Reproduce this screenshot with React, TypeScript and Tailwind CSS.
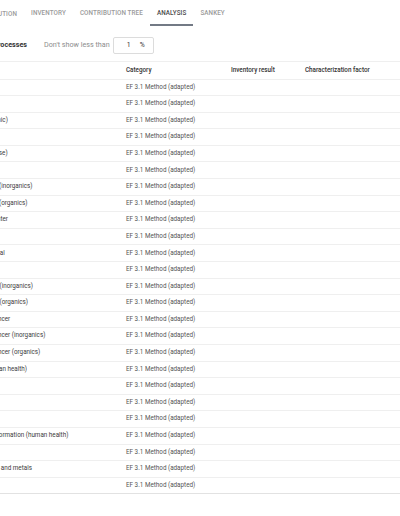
import type React from "react";

const tabs = ["INVENTORY", "CONTRIBUTION TREE", "ANALYSIS", "SANKEY"];

const categories = [
  "Acidification",
  "Climate change",
  "Climate change (biogenic)",
  "Climate change (fossil)",
  "Climate change (land use)",
  "Ecotoxicity, freshwater",
  "Ecotoxicity, freshwater (inorganics)",
  "Ecotoxicity, freshwater (organics)",
  "Eutrophication, freshwater",
  "Eutrophication, marine",
  "Eutrophication, terrestrial",
  "Human toxicity, cancer",
  "Human toxicity, cancer (inorganics)",
  "Human toxicity, cancer (organics)",
  "Human toxicity, non-cancer",
  "Human toxicity, non-cancer (inorganics)",
  "Human toxicity, non-cancer (organics)",
  "Ionising radiation (human health)",
  "Land use",
  "Ozone depletion",
  "Particulate matter",
  "Photochemical ozone formation (human health)",
  "Resource use, fossils",
  "Resource use, minerals and metals",
  "Water use",
];

const App: React.FC = () => {
  return (
    <div className="w-[400px] h-[516px] overflow-hidden bg-white font-['Roboto',sans-serif]">
      {/* Onglets */}
      <div className="flex h-[26px] text-[6.3px] font-medium tracking-[0.1px] uppercase">
        <div className="w-[24px] flex justify-end">
          <div className="whitespace-nowrap pr-[7px] pt-[4px] flex items-center text-[#9a9a9a]">
            DISTRIBUTION
          </div>
        </div>
        {tabs.map((t) => (
          <div
            key={t}
            className={
              t === "ANALYSIS"
                ? "px-[7px] pt-[4px] flex items-center whitespace-nowrap text-[#4a4a4a] border-b-2 border-[#737a85]"
                : "px-[7px] pt-[4px] flex items-center whitespace-nowrap text-[#9a9a9a] border-b-2 border-transparent"
            }
          >
            {t}
          </div>
        ))}
      </div>

      {/* Filtre */}
      <div className="flex items-center h-[35px] pt-[3px]">
        <div className="w-[27px] flex justify-end">
          <span className="whitespace-nowrap text-[7.2px] font-bold text-[#333]">
            Show processes
          </span>
        </div>
        <span className="ml-[17px] whitespace-nowrap text-[7.2px] text-[#8c8c8c]">
          Don't show less than
        </span>
        <div className="ml-[3px] w-[41px] h-[17px] border border-[#dcdcdc] rounded-[2px] flex items-center text-[6.8px] text-[#333]">
          <span className="ml-[13px]">1</span>
          <span className="ml-auto mr-[8px]">%</span>
        </div>
      </div>

      {/* Tableau */}
      <div className="border-t border-[#efefef]">
        <div className="grid grid-cols-[126px_105px_74px_1fr] h-[17.5px] items-center border-b border-[#efefef] text-[6.3px] font-medium text-[#333]">
          <div className="-ml-[65.5px] whitespace-nowrap">Name</div>
          <div>Category</div>
          <div>Inventory result</div>
          <div>Characterization factor</div>
        </div>
        {categories.map((c, i) => (
          <div
            key={c}
            className={
              i === categories.length - 1
                ? "grid grid-cols-[126px_105px_74px_1fr] h-[16.6px] items-center border-b border-[#e2e2e2] text-[6.3px]"
                : "grid grid-cols-[126px_105px_74px_1fr] h-[16.6px] items-center border-b border-[#efefef] text-[6.3px]"
            }
          >
            <div className="-ml-[65.5px] whitespace-nowrap text-[#3c3c3c]">{c}</div>
            <div className="whitespace-nowrap text-[#555]">EF 3.1 Method (adapted)</div>
            <div />
            <div />
          </div>
        ))}
      </div>
    </div>
  );
};

export default App;
